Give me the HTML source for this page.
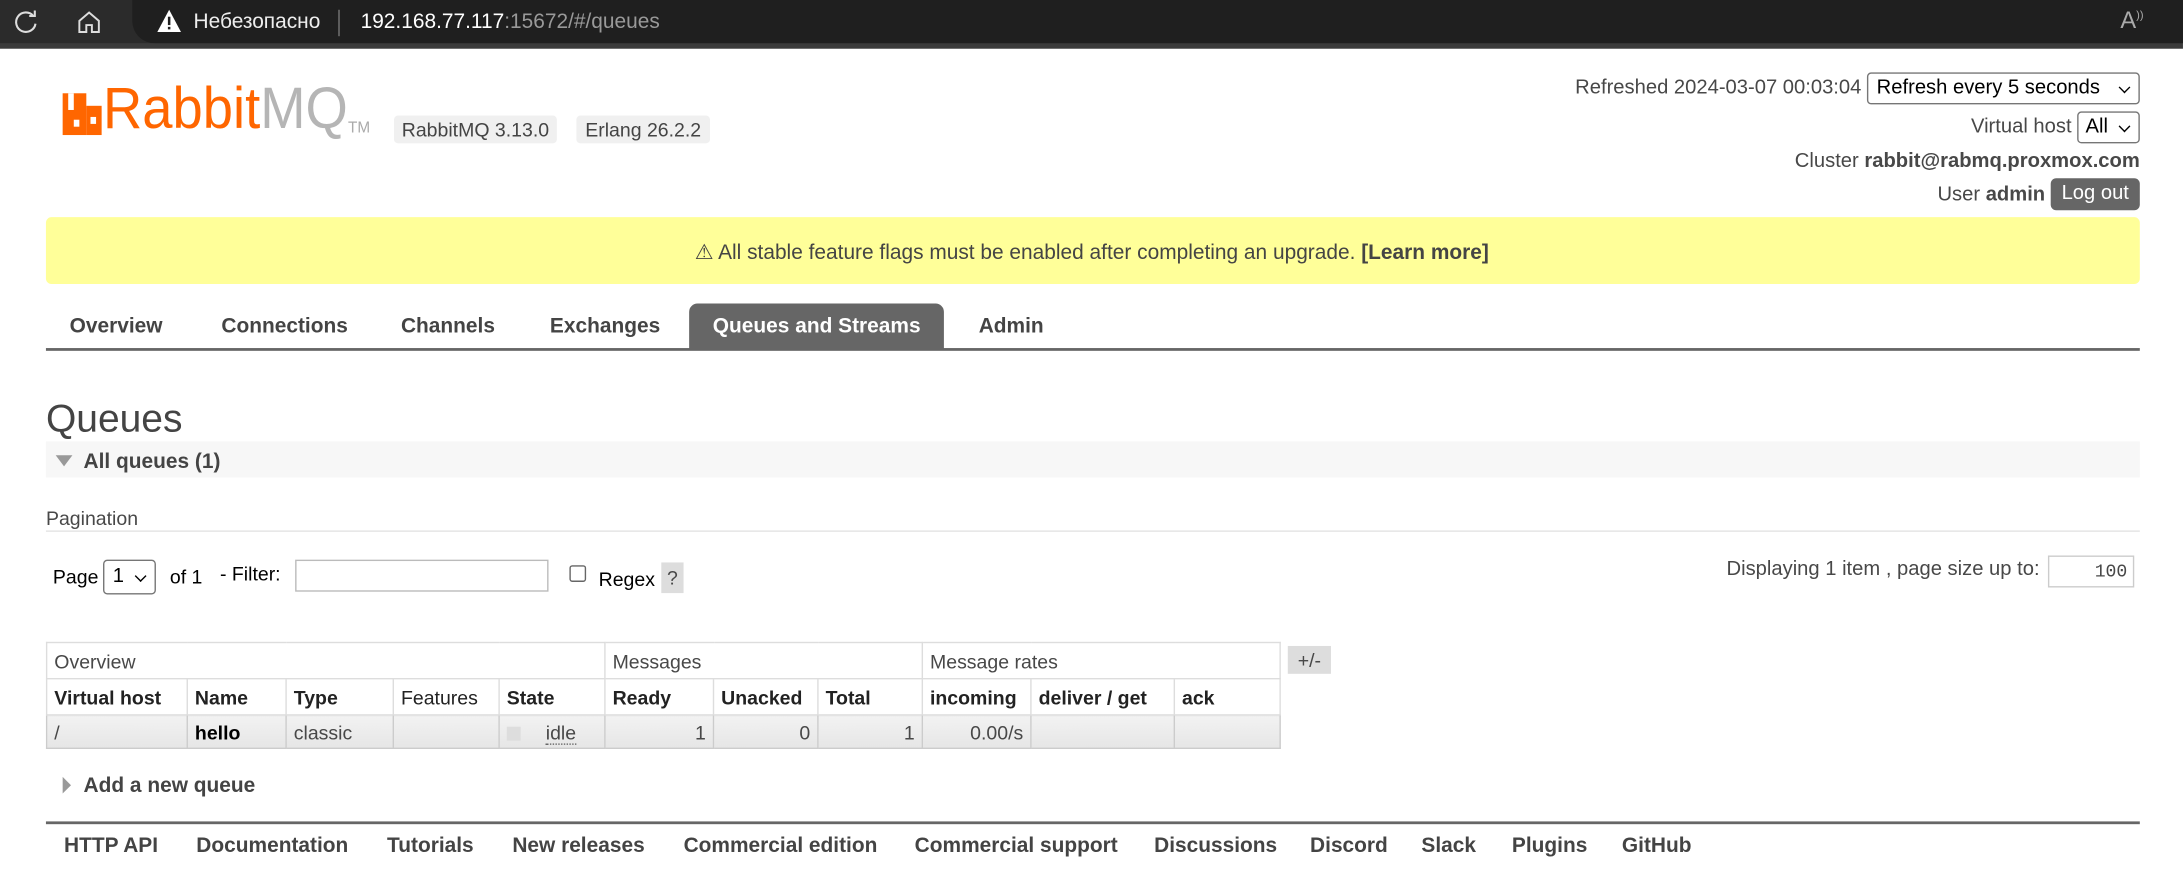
<!DOCTYPE html>
<html><head><meta charset="utf-8">
<style>
html,body{margin:0;padding:0;width:2183px;height:893px;overflow:hidden;background:#fff}
#w{position:absolute;left:0;top:0;width:1568px;height:642px;transform:scale(1.3922);transform-origin:0 0;font-family:"Liberation Sans",sans-serif;font-size:14px;color:#484848}
.a{position:absolute;white-space:nowrap}
b{font-weight:bold}
.nav{font-weight:bold;font-size:15px;top:226px;color:#444}
.sel{position:absolute;border:1px solid #767676;border-radius:3px;background:#fff;color:#000;font-size:14.5px;box-sizing:border-box}
.sel:after{content:"";position:absolute;right:7px;top:50%;width:5px;height:5px;border-right:1.5px solid #000;border-bottom:1.5px solid #000;transform:translateY(-70%) rotate(45deg)}
table{position:absolute;left:33px;top:461px;border-collapse:collapse;font-size:14px}
td,th{border:1px solid #ddd;padding:0 5px;text-align:left;height:26px;box-sizing:border-box;white-space:nowrap}
th{font-weight:bold;color:#222}
.g td{font-weight:normal}
.d td{background:linear-gradient(#f2f2f2,#e6e6e6);height:24px;border-color:#ccc}
.r{text-align:right}
.f{top:599px;font-weight:bold;font-size:15px;color:#444}
</style></head><body><div id="w">
<div class="a" style="left:0;top:0;width:1568px;height:35px;background:#3b3b3b"></div>
<div class="a" style="left:0;top:0;width:1568px;height:31px;background:#2b2b2b"></div>
<div class="a" style="left:95px;top:0;width:1473px;height:31px;background:#1f1f1f;border-radius:0 0 0 16px"></div>
<svg class="a" style="left:9px;top:6px" width="20" height="20" viewBox="0 0 20 20"><path d="M15 5.5A7 7 0 1 0 16.5 11" fill="none" stroke="#ddd" stroke-width="1.5"/><path d="M12 5.5h4v-4" fill="none" stroke="#ddd" stroke-width="1.5"/></svg>
<svg class="a" style="left:54px;top:6px" width="20" height="20" viewBox="0 0 20 20"><path d="M3 9L10 3l7 6v8h-5v-5h-4v5H3z" fill="none" stroke="#ddd" stroke-width="1.4"/></svg>
<svg class="a" style="left:112px;top:6px" width="19" height="18" viewBox="0 0 19 18"><path d="M9.5 1L18 17H1z" fill="#fff"/><rect x="8.6" y="6" width="1.8" height="6" fill="#1f1f1f"/><rect x="8.6" y="13.3" width="1.8" height="1.8" fill="#1f1f1f"/></svg>
<div class="a" style="left:139px;top:7px;font-size:15px;color:#eee">Небезопасно</div>
<div class="a" style="left:243px;top:7px;width:1px;height:19px;background:#777"></div>
<div class="a" style="left:259px;top:7px;font-size:15px;color:#fff">192.168.77.117<span style="color:#999">:15672/#/queues</span></div>
<div class="a" style="left:1523px;top:5px;font-size:17px;color:#aaa">A<sup style="font-size:8px">))</sup></div>
<!-- logo -->
<div class="a" style="left:45px;top:67px;width:17px;height:30px;background:#f60"></div>
<div class="a" style="left:49px;top:67px;width:4px;height:12px;background:#fff"></div>
<div class="a" style="left:53px;top:86px;width:4px;height:5px;background:#fff"></div>
<div class="a" style="left:62px;top:76px;width:11px;height:21px;background:#f60"></div>
<div class="a" style="left:65px;top:84px;width:4px;height:5px;background:#fff"></div>
<div class="a" style="left:74px;top:54px;font-size:42px;transform:scaleX(.93);transform-origin:0 0"><span style="color:#f60">Rabbit</span><span style="color:#b5b5b5">MQ</span></div>
<div class="a" style="left:250px;top:86px;font-size:11px;color:#aaa">TM</div>
<div class="a" style="left:283px;top:83px;width:117px;height:20px;background:#f0f0f0;border-radius:3px;line-height:20px;text-align:center;font-size:14px;color:#444">RabbitMQ 3.13.0</div>
<div class="a" style="left:414px;top:83px;width:96px;height:20px;background:#f0f0f0;border-radius:3px;line-height:20px;text-align:center;font-size:14px;color:#444">Erlang 26.2.2</div>
<div class="a" style="right:231px;top:55px;font-size:14.5px">Refreshed 2024-03-07 00:03:04</div>
<div class="sel" style="left:1341px;top:52px;width:196px;height:23px;line-height:21px;padding-left:6px">Refresh every 5 seconds</div>
<div class="a" style="right:80px;top:83px;font-size:14.5px">Virtual host</div>
<div class="sel" style="left:1492px;top:80px;width:45px;height:23px;line-height:21px;padding-left:5px">All</div>
<div class="a" style="right:31px;top:108px;font-size:14.5px">Cluster <b>rabbit@rabmq.proxmox.com</b></div>
<div class="a" style="right:99px;top:132px;font-size:14.5px">User <b>admin</b></div>
<div class="a" style="left:1473px;top:128px;width:64px;height:23px;background:#666;color:#fff;border-radius:4px;line-height:23px;text-align:center;font-size:14.5px">Log out</div>
<div class="a" style="left:33px;top:156px;width:1504px;height:48px;background:#ff9;border-radius:4px"></div>
<div class="a" style="left:499px;top:172px;font-size:15px;color:#444">⚠ All stable feature flags must be enabled after completing an upgrade. <b>[Learn more]</b></div>
<div class="a" style="left:495px;top:218px;width:183px;height:33px;background:#666;border-radius:6px 6px 0 0"></div>
<div class="a" style="left:33px;top:250px;width:1504px;height:1.5px;background:#666"></div>
<div class="a nav" style="left:50px">Overview</div>
<div class="a nav" style="left:159px">Connections</div>
<div class="a nav" style="left:288px">Channels</div>
<div class="a nav" style="left:395px">Exchanges</div>
<div class="a nav" style="left:512px;color:#fff">Queues and Streams</div>
<div class="a nav" style="left:703px">Admin</div>
<div class="a" style="left:33px;top:285px;font-size:28px;color:#444">Queues</div>
<div class="a" style="left:33px;top:317px;width:1504px;height:26px;background:#f7f7f7"></div>
<div class="a" style="left:40px;top:327px;width:0;height:0;border-left:6px solid transparent;border-right:6px solid transparent;border-top:8px solid #999"></div>
<div class="a" style="left:60px;top:323px;font-weight:bold;font-size:15px;color:#444">All queues (1)</div>
<div class="a" style="left:33px;top:364px;font-size:14px">Pagination</div>
<div class="a" style="left:33px;top:381px;width:1504px;height:1px;background:#e3e3e3"></div>
<div class="a" style="left:38px;top:406px;color:#000">Page</div>
<div class="sel" style="left:74px;top:402px;width:38px;height:25px;line-height:23px;padding-left:6px">1</div>
<div class="a" style="left:122px;top:406px;color:#000">of 1</div>
<div class="a" style="left:158px;top:404px;color:#000">- Filter:</div>
<div class="a" style="left:212px;top:402px;width:182px;height:23px;border:1px solid #bbb;box-sizing:border-box"></div>
<div class="a" style="left:409px;top:406px;width:12px;height:12px;border:1px solid #666;border-radius:2px;box-sizing:border-box"></div>
<div class="a" style="left:430px;top:408px;color:#000">Regex</div>
<div class="a" style="left:475px;top:404px;width:16px;height:22px;background:#ddd;text-align:center;line-height:22px">?</div>
<div class="a" style="right:103px;top:401px;font-size:14.5px">Displaying 1 item , page size up to:</div>
<div class="a" style="left:1471px;top:399px;width:62px;height:23px;border:1px solid #ccc;box-sizing:border-box;text-align:right;padding-right:4px;line-height:21px;font-family:'Liberation Mono',monospace;font-size:13px">100</div>
<table>
<tr class="g"><td colspan="5" style="width:401px">Overview</td><td colspan="3" style="width:228px">Messages</td><td colspan="3" style="width:257px">Message rates</td></tr>
<tr><th style="width:101px">Virtual host</th><th style="width:71px">Name</th><th style="width:77px">Type</th><th style="width:76px;font-weight:normal">Features</th><th style="width:76px">State</th><th style="width:78px">Ready</th><th style="width:75px">Unacked</th><th style="width:75px">Total</th><th style="width:78px">incoming</th><th style="width:103px">deliver / get</th><th style="width:76px">ack</th></tr>
<tr class="d"><td>/</td><td><b style="color:#000">hello</b></td><td>classic</td><td></td><td><span style="display:inline-block;width:10px;height:10px;background:#ddd;vertical-align:-1px;margin-right:18px"></span><span style="border-bottom:1px dotted #666">idle</span></td><td class="r">1</td><td class="r">0</td><td class="r">1</td><td class="r">0.00/s</td><td></td><td></td></tr>
</table>
<div class="a" style="left:925px;top:464px;width:31px;height:20px;background:#ddd;text-align:center;line-height:20px;font-size:14px">+/-</div>
<div class="a" style="left:45px;top:558px;width:0;height:0;border-top:6px solid transparent;border-bottom:6px solid transparent;border-left:6px solid #999"></div>
<div class="a" style="left:60px;top:556px;font-weight:bold;font-size:15px;color:#444">Add a new queue</div>
<div class="a" style="left:33px;top:590px;width:1504px;height:1.5px;background:#666"></div>
<div class="a f" style="left:46px">HTTP API</div>
<div class="a f" style="left:141px">Documentation</div>
<div class="a f" style="left:278px">Tutorials</div>
<div class="a f" style="left:368px">New releases</div>
<div class="a f" style="left:491px">Commercial edition</div>
<div class="a f" style="left:657px">Commercial support</div>
<div class="a f" style="left:829px">Discussions</div>
<div class="a f" style="left:941px">Discord</div>
<div class="a f" style="left:1021px">Slack</div>
<div class="a f" style="left:1086px">Plugins</div>
<div class="a f" style="left:1165px">GitHub</div>
</div></body></html>
